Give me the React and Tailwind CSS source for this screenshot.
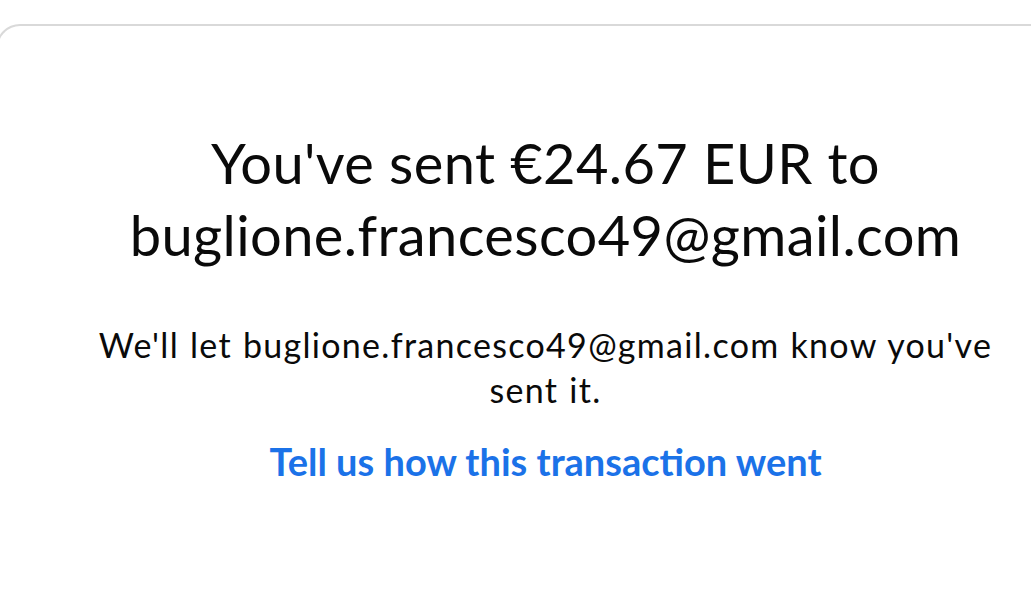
export default function App() {
  return (
    <div className="min-h-[595px] bg-white overflow-hidden pt-[24px]" style={{ fontFamily: 'Lato, "Open Sans", sans-serif' }}>
      <div className="-ml-1 min-h-[571px] border-t-2 border-l-2 border-[#d9d9d9] rounded-tl-[24px] pl-[62px] pt-[101px]">
        <div className="flex flex-col items-center text-center text-[#0a0a0a]">
          <h1 className="text-[56px] leading-[72px] font-normal w-[900px] tracking-[0.4px]">
            You've sent €24.67 EUR to buglione.francesco49@gmail.com
          </h1>
          <p className="mt-[51px] text-[34px] leading-[45px] w-[920px] tracking-[1.3px] [word-spacing:1px]">
            We'll let buglione.francesco49@gmail.com know you've sent it.
          </p>
          <a href="#" className="mt-[27px] text-[38px] leading-[44px] font-bold text-[#1b72e8]">
            Tell us how this transaction went
          </a>
        </div>
      </div>
    </div>
  )
}
